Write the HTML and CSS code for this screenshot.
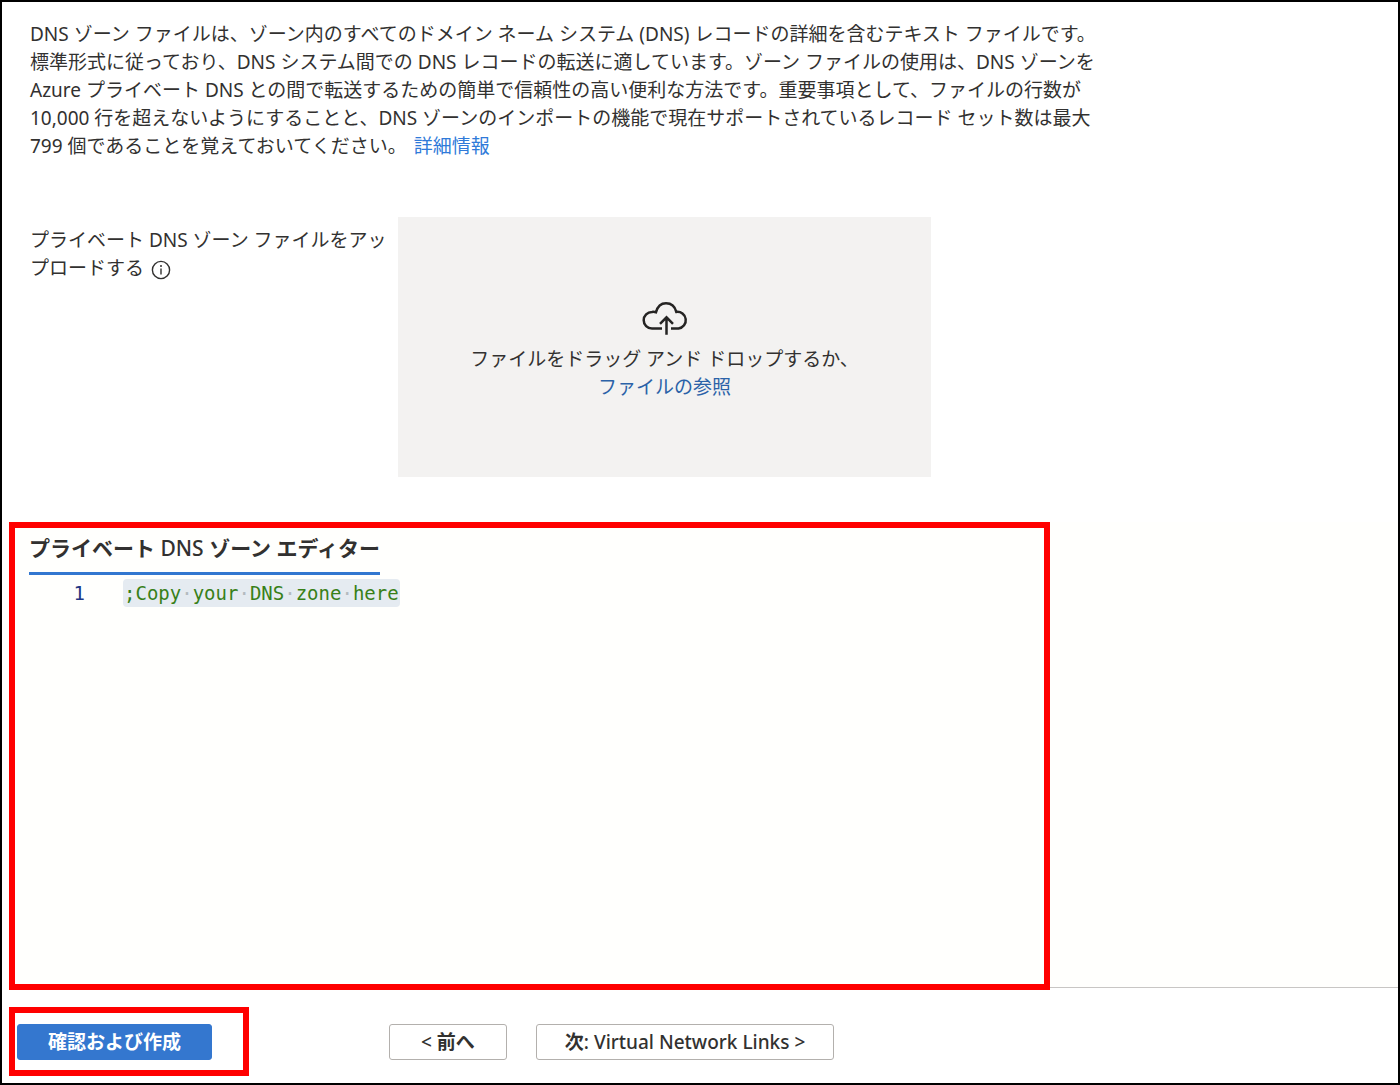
FILE: index.html
```html
<!DOCTYPE html>
<html lang="ja">
<head>
    <meta charset="UTF-8">
    <meta name="viewport" content="width=device-width, initial-scale=1.0">
    <title>プライベート DNS ゾーン エディター</title>
    <link rel="stylesheet" href="styles.css">
</head>
<body>

    <main class="page">
        <p class="description">
            <span>DNS ゾーン ファイルは、ゾーン内のすべてのドメイン ネーム システム (DNS) レコードの詳細を含むテキスト ファイルです。標準形式に従っており、DNS システム間での DNS レコードの転送に適しています。ゾーン ファイルの使用は、DNS ゾーンを Azure プライベート DNS との間で転送するための簡単で信頼性の高い便利な方法です。重要事項として、ファイルの行数が 10,000 行を超えないようにすることと、DNS ゾーンのインポートの機能で現在サポートされているレコード セット数は最大 799 個であることを覚えておいてください。</span>
            <a href="#">詳細情報</a>
        </p>

        <!-- File upload -->
        <div class="upload">
            <div class="upload-label">
                プライベート DNS ゾーン ファイルをアップロードする
                <svg class="info-icon" viewBox="0 0 20 20" role="img" aria-label="情報">
                    <circle cx="10" cy="10" r="8.6" fill="none" stroke="currentColor" stroke-width="1.4"/>
                    <path d="M10 8.5v6" stroke="currentColor" stroke-width="1.4"/>
                    <circle cx="10" cy="6" r="1" fill="currentColor"/>
                </svg>
            </div>
            <div class="drop-zone">
                <svg class="cloud-icon" viewBox="0 0 46 34" aria-hidden="true">
                    <path d="M20 27.5H10A8.300 8.300 0 0 1 10 10.900Q12 10.600 14 11.200C15.500 5.500 19.500 2.200 24 2.200C29 2.200 33 5.500 34.300 10.900A8.300 8.300 0 0 1 36.500 27.500H29" fill="none" stroke="currentColor" stroke-width="2.500"/>
                    <path d="M24.500 33.800V16.500M18 22.800L24.500 16.300L31 22.800" fill="none" stroke="currentColor" stroke-width="2.500"/>
                </svg>
                <span>ファイルをドラッグ アンド ドロップするか、</span>
                <a href="#">ファイルの参照</a>
            </div>
        </div>

        <!-- Zone editor -->
        <div class="editor-row">
            <section class="editor highlight">
                <h2 class="editor-title">プライベート <span>DNS</span> ゾーン エディター</h2>
                <div class="code-line">
                    <span class="line-number">1</span>
                    <code class="code">;Copy<i>·</i>your<i>·</i>DNS<i>·</i>zone<i>·</i>here</code>
                </div>
            </section>
        </div>

        <footer class="actions">
            <div class="create highlight">
                <button type="button" class="btn btn-primary">確認および作成</button>
            </div>
            <button type="button" class="btn btn-previous">&lt; <b>前へ</b></button>
            <button type="button" class="btn btn-next"><b>次</b>: Virtual Network Links &gt;</button>
        </footer>
    </main>

</body>
</html>
```
FILE: styles.css
```css
* {
    box-sizing: border-box;
}
body {
    margin: 0;
    font-family: "Noto Sans", "Noto Sans CJK JP", sans-serif;
    font-size: 19px;
    line-height: 28px;
    color: #323130;
    background-color: #fff;
}
a {
    color: #2f7ad9;
    text-decoration: none;
}
.page {
    display: flex;
    flex-direction: column;
    min-height: 100vh;
    border: 2px solid #000;
}
.description {
    max-width: 1080px;
    margin: 18px 28px 0;
}
.description a {
    margin-left: 2px;
}
.upload {
    display: flex;
    margin: 57px 28px 0;
}
.upload-label {
    width: 368px;
    padding: 9px 4px 0 0;
}
.info-icon {
    width: 20px;
    height: 20px;
    margin-left: 2px;
    vertical-align: -5px;
}
.drop-zone {
    display: flex;
    flex-direction: column;
    align-items: center;
    width: 533px;
    padding: 84px 0 76px;
    background-color: #f3f2f1;
}
.drop-zone a {
    color: #2b62a8;
}
.cloud-icon {
    width: 46px;
    height: 34px;
    margin-bottom: 10px;
    color: #252423;
}
/* Red frame round the parts to fill in */
.highlight {
    border: 6px solid #f00;
}
.editor-row {
    display: flex;
    flex: 1;
    margin-top: 45px;
    padding-left: 7px;
}
.editor-row::after {
    content: "";
    flex: 1;
    border-bottom: 1px solid #c8c6c4;
    background-color: #fffffd;
}
.editor {
    width: 1041px;
    margin-bottom: -2px;
    padding-left: 14px;
    background-color: #fffffd;
}
.editor-title {
    width: fit-content;
    margin: 0;
    padding: 6px 0 10px;
    border-bottom: 3px solid #3277d0;
    font-size: 21px;
    font-weight: 600;
}
.editor-title span {
    font-weight: 500;
}
.code-line {
    display: flex;
    margin-top: 4px;
    font-family: "DejaVu Sans Mono", monospace;
}
.line-number {
    width: 56px;
    margin-right: 38px;
    text-align: right;
    color: #1f3684;
}
.code {
    padding: 0 1px;
    border-radius: 4px;
    font-family: inherit;
    color: #388018;
    background-color: #e5ebf1;
}
.code i {
    font-style: normal;
    color: #b4babf;
}
.actions {
    display: flex;
    align-items: center;
    padding: 19px 7px 7px;
}
.create {
    width: 240px;
    padding: 11px 2px 10px;
}
.btn {
    height: 36px;
    padding: 0 31px;
    border: 1px solid #b3b0ad;
    border-radius: 3px;
    font: inherit;
    font-weight: 500;
    color: #323130;
    background-color: #fff;
    cursor: pointer;
}
.btn-primary {
    display: block;
    padding: 0 30px;
    border-color: #3477cf;
    font-weight: 700;
    color: #fff;
    background-color: #3477cf;
}
.btn-previous {
    margin: 0 29px 0 140px;
}
.btn-next {
    padding: 0 28px;
}
```
